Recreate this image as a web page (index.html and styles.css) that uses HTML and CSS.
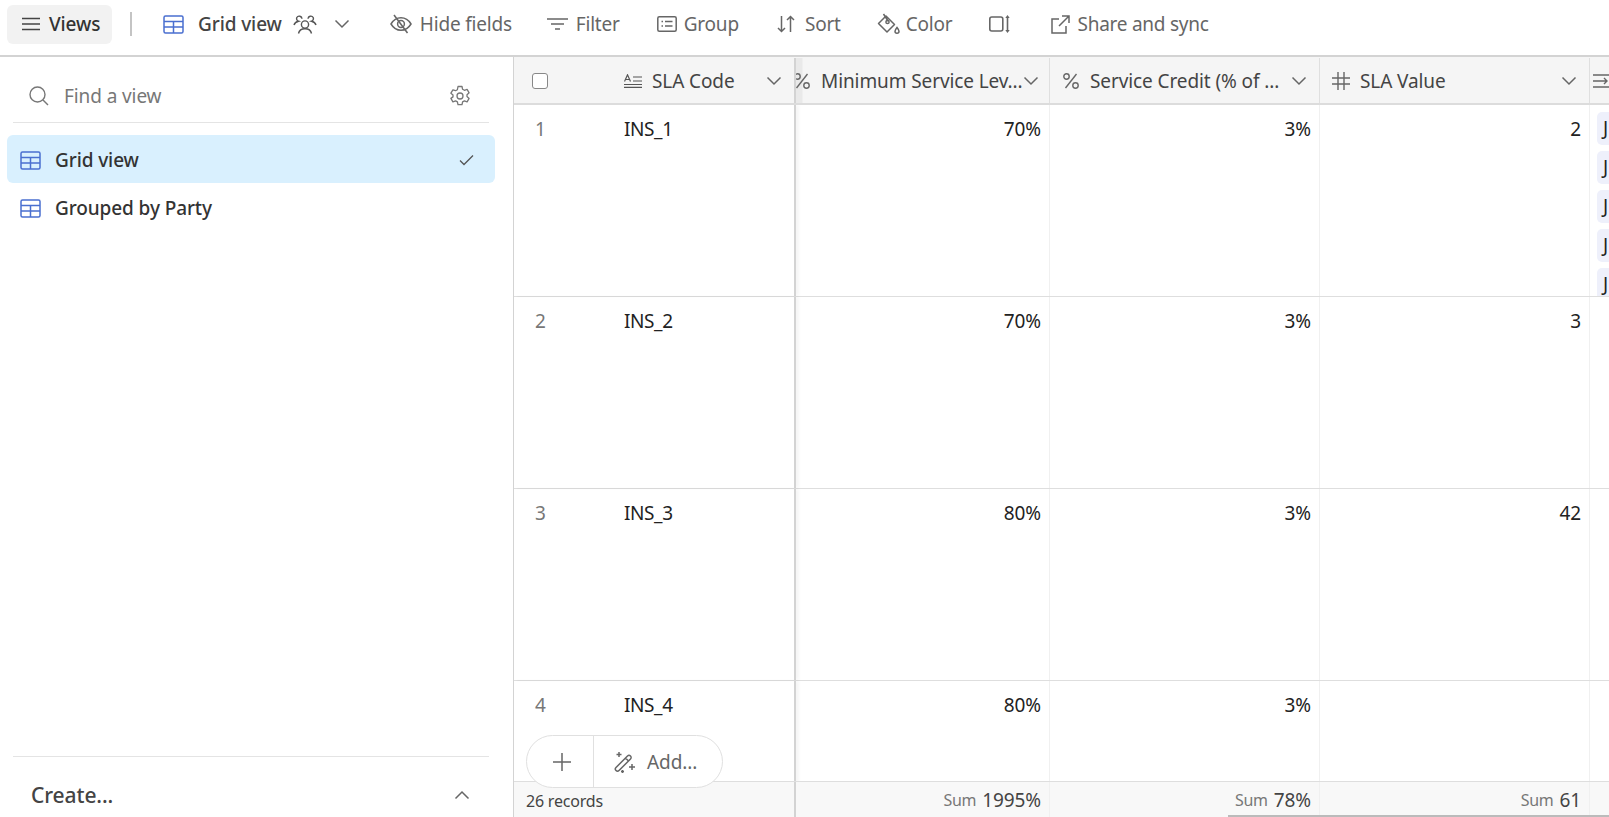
FILE: index.html

```html
<!DOCTYPE html>
<html lang="en">
<head>
  <meta charset="UTF-8" />
  <title>Grid view</title>
  <link rel="stylesheet" href="styles.css">
</head>
<body>
  <svg class="sprite" width="0" height="0">
    <symbol id="i-grid" viewBox="0 0 21 19"><path d="M2.500 1h16A1.500 1.500 0 0 1 20 2.500v14a1.500 1.500 0 0 1-1.500 1.500h-16A1.500 1.500 0 0 1 1 16.500v-14A1.500 1.500 0 0 1 2.500 1zM1 6.500h19M1 12h19M10.500 6.500V18" fill="none" stroke="currentColor" stroke-width="1.500"/></symbol>
    <symbol id="i-chev" viewBox="0 0 16 10"><path d="M1.500 1.500 8 8l6.500-6.500" fill="none" stroke="currentColor" stroke-width="1.500"/></symbol>
    <symbol id="i-pct" viewBox="0 0 18 18"><circle cx="4.500" cy="4.500" r="2.700" fill="none" stroke="currentColor" stroke-width="1.400"/><circle cx="13.500" cy="13.500" r="2.700" fill="none" stroke="currentColor" stroke-width="1.400"/><path d="M14.500 2 3.500 16" stroke="currentColor" stroke-width="1.400"/></symbol>
  </svg>

  <div class="topbar">
    <button class="views-btn">
      <svg class="ico-views" viewBox="0 0 18 14"><path d="M0 1.500h18M0 7h18M0 12.500h18" stroke="currentColor" stroke-width="1.600"/></svg>
      Views
    </button>
    <span class="bar-sep"></span>
    <svg class="ico-grid bar-grid"><use href="#i-grid"/></svg>
    <span class="view-name">Grid view</span>
    <svg class="ico-people" viewBox="0 0 24 19" fill="none" stroke="currentColor" stroke-width="1.400"><circle cx="12" cy="9.500" r="3.600"/><path d="M5.500 18.500c.6-3 3.200-4.800 6.500-4.800s5.900 1.800 6.500 4.800M9 3.800A2.800 2.800 0 0 0 3.800 2.500c-.6 1.500.2 3.200 1.700 3.700C3.200 6.700 1.500 8.200 1 10M15 3.800a2.800 2.800 0 0 1 5.200-1.300c.6 1.500-.2 3.200-1.700 3.700 2.300.5 4 2 4.500 3.800"/></svg>
    <svg class="ico-chev view-chev"><use href="#i-chev"/></svg>
    <div class="tool tool-hide">
      <svg class="ico-hide" viewBox="0 0 22 20" fill="none" stroke="currentColor" stroke-width="1.500"><path d="M1 10c2.500-4.200 6-6.200 10-6.200s7.500 2 10 6.200c-2.500 4.200-6 6.200-10 6.200S3.500 14.200 1 10z"/><circle cx="11" cy="10" r="3.400"/><path d="M4 1l13.500 18"/></svg>
      Hide fields
    </div>
    <div class="tool tool-filter">
      <svg class="ico-filter" viewBox="0 0 21 12"><path d="M0 1h21M4 6h13M8 11h5" stroke="currentColor" stroke-width="1.500"/></svg>
      Filter
    </div>
    <div class="tool tool-group">
      <svg class="ico-group" viewBox="0 0 20 16" fill="none" stroke="currentColor" stroke-width="1.500"><rect x=".8" y=".8" width="18.400" height="14.400" rx="1.500"/><path d="M4.500 5.500h1.500M8 5.500h7.500M4.500 10h1.500M8 10h7.500"/></svg>
      Group
    </div>
    <div class="tool tool-sort">
      <svg class="ico-sort" viewBox="0 0 18 18" fill="none" stroke="currentColor" stroke-width="1.500"><path d="M4.500 1v15.500M1 13l3.500 3.500L8 13M13.500 17V1.500M10 5l3.500-3.500L17 5"/></svg>
      Sort
    </div>
    <div class="tool tool-color">
      <svg class="ico-color" viewBox="0 0 23 22" fill="none" stroke="currentColor" stroke-width="1.500"><path d="M9 3 1.500 10.500 10 19l7.500-7.500zM6.500 1l4.500 7" stroke-linejoin="round"/><circle cx="10.500" cy="9" r="1.600"/><path d="M20 14.500c1.300 1.600 2 2.600 2 3.700a2 2 0 0 1-4 0c0-1.100.7-2.100 2-3.700z"/></svg>
      Color
    </div>
    <svg class="ico-row" viewBox="0 0 21 20" fill="none" stroke="currentColor" stroke-width="1.600"><rect x=".8" y="3" width="13" height="14" rx="2"/><path d="M18.500 3v14"/><path d="M18.500 1l-2.200 3h4.400zM18.500 19l-2.200-3h4.400z" fill="currentColor" stroke="none"/></svg>
    <div class="tool tool-share">
      <svg class="ico-share" viewBox="0 0 19 19" fill="none" stroke="currentColor" stroke-width="1.500"><path d="M8 4H1v14h14v-7M11 1h7v7M18 1 8 11"/></svg>
      Share and sync
    </div>
  </div>

  <div class="main">
    <div class="sidebar">
      <div class="find">
        <svg class="ico-search" viewBox="0 0 20 20" fill="none" stroke="currentColor" stroke-width="1.400"><circle cx="8.500" cy="8.500" r="7.500"/><path d="M14 14l5 5"/></svg>
        <span class="find-text">Find a view</span>
        <svg class="ico-gear" viewBox="0 0 22 22" fill="none" stroke="currentColor" stroke-width="1.300"><circle cx="11" cy="11" r="3"/><path d="M9 1.500h4l.6 2.800 1.800 1 2.700-.9 2 3.400-2.100 1.900v1.800l2.100 1.900-2 3.400-2.700-.9-1.800 1-.6 2.800H9l-.6-2.800-1.800-1-2.700.9-2-3.400L4 11.900v-1.800L1.900 8.200l2-3.400 2.700.9 1.800-1z" stroke-linejoin="round"/></svg>
      </div>
      <div class="view-item selected">
        <svg class="ico-grid"><use href="#i-grid"/></svg>
        <span class="view-label">Grid view</span>
        <svg class="ico-check" viewBox="0 0 15 12"><path d="M1 6.500 5 10.500 14 1.500" fill="none" stroke="currentColor" stroke-width="1.300"/></svg>
      </div>
      <div class="view-item">
        <svg class="ico-grid"><use href="#i-grid"/></svg>
        <span class="view-label">Grouped by Party</span>
      </div>
      <div class="create">
        <span>Create...</span>
        <svg class="ico-chev flip"><use href="#i-chev"/></svg>
      </div>
    </div>

    <div class="grid">
      <div class="row head">
        <div class="left">
          <div class="num"><span class="checkbox"></span></div>
          <div class="code">
            <svg class="ico-text" viewBox="0 0 18 14" fill="none" stroke="currentColor" stroke-width="1.200"><path d="M0 10.500h18M0 13.300h18M9 3h9M9 7h9M.5 7.500 3.500.8l3 6.700M1.500 5.500h4"/></svg>
            <span>SLA Code</span>
            <svg class="ico-chev head-chev"><use href="#i-chev"/></svg>
          </div>
        </div>
        <div class="cell col-min">
          <svg class="ico-pct pct-clipped"><use href="#i-pct"/></svg>
          <span class="title">Minimum Service Lev...</span>
          <svg class="ico-chev"><use href="#i-chev"/></svg>
        </div>
        <div class="cell">
          <svg class="ico-pct"><use href="#i-pct"/></svg>
          <span class="title">Service Credit (% of ...</span>
          <svg class="ico-chev"><use href="#i-chev"/></svg>
        </div>
        <div class="cell">
          <svg class="ico-hash" viewBox="0 0 18 18" fill="none" stroke="currentColor" stroke-width="1.400"><path d="M0 6h18M0 12h18M6 0v18M12 0v18"/></svg>
          <span class="title">SLA Value</span>
          <svg class="ico-chev"><use href="#i-chev"/></svg>
        </div>
        <div class="cell last">
          <svg class="ico-link" viewBox="0 0 18 18" fill="none" stroke="currentColor" stroke-width="1.400"><path d="M0 3h18M0 9h14M0 15h18M11 6l3 3-3 3"/></svg>
        </div>
      </div>

      <div class="body">
        <div class="row rec">
          <div class="left"><div class="num">1</div><div class="code">INS_1</div></div>
          <div class="cell">70%</div>
          <div class="cell">3%</div>
          <div class="cell">2</div>
          <div class="cell last chips">
            <span class="chip">J</span><span class="chip">J</span><span class="chip">J</span><span class="chip">J</span><span class="chip">J</span>
          </div>
        </div>
        <div class="row rec">
          <div class="left"><div class="num">2</div><div class="code">INS_2</div></div>
          <div class="cell">70%</div>
          <div class="cell">3%</div>
          <div class="cell">3</div>
          <div class="cell last"></div>
        </div>
        <div class="row rec">
          <div class="left"><div class="num">3</div><div class="code">INS_3</div></div>
          <div class="cell">80%</div>
          <div class="cell">3%</div>
          <div class="cell">42</div>
          <div class="cell last"></div>
        </div>
        <div class="row rec">
          <div class="left"><div class="num">4</div><div class="code">INS_4</div></div>
          <div class="cell">80%</div>
          <div class="cell">3%</div>
          <div class="cell"></div>
          <div class="cell last"></div>
        </div>
      </div>

      <div class="row foot">
        <div class="left records">26 records</div>
        <div class="cell"><small>Sum</small> 1995%</div>
        <div class="cell"><small>Sum</small> 78%</div>
        <div class="cell"><small>Sum</small> 61</div>
        <div class="cell last"></div>
      </div>

      <div class="add-pill">
        <div class="add-plus"><svg viewBox="0 0 18 18" class="ico-plus"><path d="M9 0v18M0 9h18" stroke="currentColor" stroke-width="1.500"/></svg></div>
        <div class="add-more">
          <svg class="ico-wand" viewBox="0 0 22 22" fill="none" stroke="currentColor" stroke-width="1.500"><path d="M2 16.500 13.500 5a2 2 0 0 1 3 3L5 19.500a2 2 0 0 1-3-3zM11.500 7l3 3M5 1v5M2.500 3.500h5M18 13v6M15 16h6M8.500 19v3M7 20.500h3"/></svg>
          Add...
        </div>
      </div>
      <div class="scroll-thumb"></div>
    </div>
  </div>
</body>
</html>
```

FILE: styles.css

```css
* {
  box-sizing: border-box;
}
html, body {
  margin: 0;
  height: 817px;
  overflow: hidden;
}
body {
  font-family: "Noto Sans", "Open Sans", sans-serif;
  font-size: 19px;
  letter-spacing: -0.1px;
  color: #222;
  background: #fff;
}
.sprite {
  position: absolute;
}
svg {
  flex: none;
  display: block;
}

/* top bar */
.topbar {
  height: 57px;
  display: flex;
  align-items: center;
  border-bottom: 2px solid #d3d3d3;
  padding: 0 0 7px 7px;
  color: #666;
  white-space: nowrap;
}
.views-btn {
  width: 105px;
  height: 39px;
  display: flex;
  align-items: center;
  gap: 9px;
  padding: 0 0 0 15px;
  border: none;
  border-radius: 6px;
  background: #f2f2f2;
  font: inherit;
  letter-spacing: inherit;
  font-weight: 500;
  color: #333;
}
.ico-views { width: 18px; height: 14px; color: #444; }
.bar-sep {
  width: 2px;
  height: 24px;
  background: #c4c4c4;
  margin: 0 31px 0 18px;
}
.ico-grid { width: 21px; height: 19px; color: #4a6fd0; }
.view-name {
  margin-left: 14px;
  font-weight: 500;
  color: #444;
}
.ico-people { width: 24px; height: 19px; margin-left: 11px; color: #555; }
.ico-chev { width: 16px; height: 10px; color: #666; }
.view-chev { margin: 0 40px 0 17px; }
.tool {
  display: flex;
  align-items: center;
  gap: 8px;
  letter-spacing: -0.2px;
}
.ico-hide { width: 22px; height: 20px; }
.tool-filter { margin-left: 35px; }
.ico-filter { width: 21px; height: 12px; }
.tool-group { margin-left: 37px; gap: 7px; }
.ico-group { width: 20px; height: 16px; }
.tool-sort { margin-left: 38px; }
.ico-sort { width: 18px; height: 18px; }
.tool-sort svg { margin-right: 2px; }
.tool-color { margin-left: 36px; gap: 6px; }
.ico-color { width: 23px; height: 22px; }
.ico-row { width: 21px; height: 20px; margin: 0 41px 0 36px; }
.ico-share { width: 19px; height: 19px; }
.tool-share { letter-spacing: -0.25px; }

/* sidebar */
.main {
  display: flex;
  height: 760px;
}
.sidebar {
  width: 514px;
  flex: none;
  display: flex;
  flex-direction: column;
  border-right: 1px solid #d3d3d3;
  padding: 0 0 0 7px;
}
.find {
  width: 476px;
  height: 66px;
  margin: 0 0 12px 6px;
  padding: 12px 18px 0 16px;
  display: flex;
  align-items: center;
  border-bottom: 1px solid #e4e4e4;
  color: #777;
}
.ico-search { width: 20px; height: 20px; }
.find-text { margin-left: 15px; flex: 1; }
.ico-gear { width: 22px; height: 22px; }
.view-item {
  width: 488px;
  height: 48px;
  padding: 2px 21px 0 13px;
  display: flex;
  align-items: center;
  border-radius: 6px;
  font-weight: 500;
  color: #333;
}
.view-item.selected {
  background: #d9f0fe;
}
.view-label {
  margin-left: 14px;
  flex: 1;
}
.ico-check { width: 15px; height: 12px; color: #555; }
.create {
  margin: auto 0 0 6px;
  width: 476px;
  height: 61px;
  padding: 16px 19px 0 18px;
  display: flex;
  align-items: center;
  justify-content: space-between;
  border-top: 1px solid #e4e4e4;
  font-size: 21px;
  font-weight: 500;
  color: #444;
}
.flip { transform: rotate(180deg); }

/* grid */
.grid {
  flex: 1;
  min-width: 0;
  display: flex;
  flex-direction: column;
  position: relative;
  overflow: hidden;
}
.row {
  display: grid;
  grid-template-columns: 282px 254px 270px 270px 1fr;
}
.left {
  display: flex;
  border-right: 2px solid #d3d3d3;
}
.num {
  width: 110px;
  padding-left: 21px;
  color: #777;
}
.code {
  flex: 1;
  display: flex;
  align-items: center;
  letter-spacing: -0.4px;
}
.cell {
  display: flex;
  justify-content: flex-end;
  padding-right: 8px;
  border-right: 1px solid #f0f0f0;
  white-space: nowrap;
}
.cell.last {
  border-right: none;
  padding: 0;
  justify-content: flex-start;
}

.head {
  height: 48px;
  padding-top: 1px;
  background: #f5f5f5;
  border-bottom: 2px solid #dcdcdc;
  color: #444;
}
.head .left, .head .num, .head .code, .head .cell {
  align-items: center;
}
.head .code { letter-spacing: -0.1px; }
.head .num {
  display: flex;
  padding-left: 18px;
}
.head .cell {
  justify-content: flex-start;
  padding: 0 12px;
  border-right-color: #dfdfdf;
  overflow: hidden;
}
.head .col-min {
  padding-left: 0;
  background: linear-gradient(to right, #e9e9e9, #e9e9e9 6px, #f5f5f5 7px);
}
.head .cell.last { padding: 0 0 0 3px; }
.checkbox {
  width: 16px;
  height: 16px;
  border: 1px solid #888;
  border-radius: 3px;
  background: #fff;
}
.ico-text { width: 18px; height: 14px; color: #555; }
.code span { margin-left: 10px; flex: 1; }
.head-chev { margin-right: 12px; }
.ico-pct { width: 18px; height: 18px; color: #666; }
.pct-clipped { margin-left: -3px; }
.ico-hash { width: 18px; height: 18px; color: #666; }
.ico-link { width: 18px; height: 18px; color: #666; }
.title {
  flex: 1;
  margin-left: 10px;
  overflow: visible;
}

.body {
  flex: 1;
  min-height: 0;
  overflow: hidden;
}
.rec {
  height: 192px;
  border-bottom: 1px solid #dedede;
}
.rec .left, .rec .cell {
  padding-top: 8px;
}
.rec .left {
  align-items: flex-start;
  box-shadow: 3px 0 3px rgba(0,0,0,0.04);
}
.rec .num { line-height: 32px; }
.rec .code { line-height: 32px; align-items: flex-start; }
.rec .cell { line-height: 32px; overflow: hidden; }
.chips {
  flex-direction: column;
  padding: 7px 0 0 7px !important;
  gap: 6px;
}
.chip {
  display: block;
  height: 33px;
  flex: none;
  padding-left: 6px;
  border-radius: 5px 0 0 5px;
  background: #eef0fb;
}

.foot {
  height: 36px;
  background: #f8f8f8;
  border-top: 1px solid #dedede;
  line-height: 37px;
  color: #444;
}
.records {
  padding-left: 12px;
  font-size: 16px;
  line-height: 39px;
  letter-spacing: -0.2px;
}
.foot small {
  font-size: 16px;
  color: #777;
  margin-right: 6px;
  letter-spacing: -0.3px;
}

/* floating add button */
.add-pill {
  position: absolute;
  left: 12px;
  top: 678px;
  width: 197px;
  height: 53px;
  display: flex;
  align-items: center;
  background: #fff;
  border: 1px solid #e0e0e0;
  border-radius: 27px;
  color: #666;
}
.add-plus {
  width: 67px;
  height: 100%;
  display: flex;
  align-items: center;
  justify-content: center;
  padding-left: 4px;
  border-right: 1px solid #e0e0e0;
}
.ico-plus { width: 18px; height: 18px; }
.add-more {
  display: flex;
  align-items: center;
  gap: 11px;
  padding-left: 20px;
}
.ico-wand { width: 22px; height: 22px; }
.scroll-thumb {
  position: absolute;
  left: 714px;
  right: 0;
  bottom: 0;
  height: 2px;
  background: #bbb;
}
```
